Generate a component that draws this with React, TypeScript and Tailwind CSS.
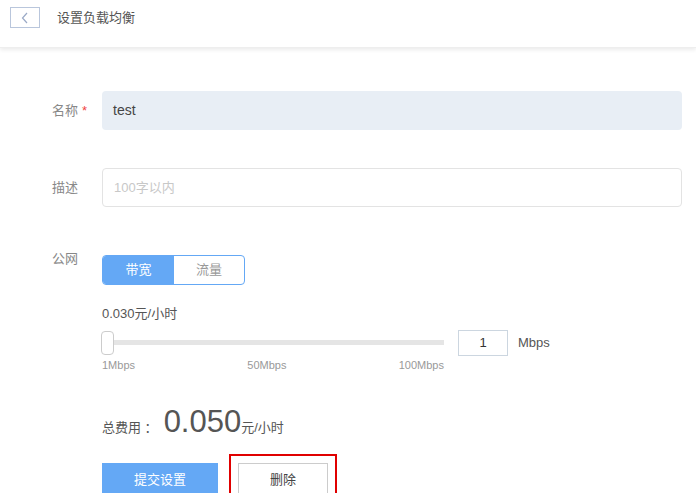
export default function App() {
  return (
    <div className="w-[696px] h-[493px] bg-white text-[13px] text-[#333] overflow-hidden" style={{ fontFamily: '"Liberation Sans","Noto Sans CJK SC",sans-serif' }}>
      <div className="h-[48px] flex items-center shadow-[0_2px_4px_rgba(0,0,0,0.08)] border-b border-[#eee]">
        <div className="ml-[10px] mt-[-12px] w-[30px] h-[21px] border border-[#b9c6dc] flex items-center justify-center">
          <svg width="8" height="12" viewBox="0 0 8 12"><path d="M6 1L1.5 6L6 11" fill="none" stroke="#9aa9c6" strokeWidth="1.2" /></svg>
        </div>
        <span className="ml-[17px] mt-[-12px] text-[#555]">设置负载均衡</span>
      </div>
      <div className="pl-[52px] pt-[43px]">
        <div className="flex items-center">
          <span className="w-[50px] text-[#888]">名称<span className="text-[#f04444] ml-1">*</span></span>
          <div className="w-[580px] h-[39px] bg-[#e8eef5] rounded-sm flex items-center px-[11px] text-[14px] text-[#444]">test</div>
        </div>
        <div className="flex items-center mt-[38px]">
          <span className="w-[50px] text-[#888]">描述</span>
          <div className="w-[580px] h-[39px] border border-[#e3e3e3] rounded-sm flex items-center px-[11px] text-[#c8c8c8]">100字以内</div>
        </div>
        <div className="flex mt-[48px]">
          <span className="w-[50px] text-[#888] mt-[-6px]">公网</span>
          <div>
            <div className="flex w-[143px] h-[30px] border border-[#64a8f5] rounded-sm overflow-hidden">
              <div className="w-[71px] bg-[#64a8f5] text-white flex items-center justify-center">带宽</div>
              <div className="flex-1 text-[#999] flex items-center justify-center">流量</div>
            </div>
            <div className="mt-[19px] text-[#555]">0.030元/小时</div>
            <div className="flex items-center mt-[6px]">
              <div className="relative w-[342px] h-[24px] flex items-center">
                <div className="w-full h-[5px] bg-[#e5e5e5]" />
                <div className="absolute left-[-1px] top-0 w-[13px] h-[24px] bg-white border border-[#ccc] rounded-sm" />
              </div>
              <div className="ml-[14px] w-[50px] h-[26px] border border-[#ccd6e0] flex items-center justify-center text-[#333]">1</div>
              <span className="ml-[10px] text-[#555]">Mbps</span>
            </div>
            <div className="flex justify-between w-[342px] text-[11px] text-[#999] mt-[1px]">
              <span>1Mbps</span><span>50Mbps</span><span>100Mbps</span>
            </div>
          </div>
        </div>
        <div className="ml-[50px] mt-[26px] flex items-baseline text-[#555]">
          <span>总费用 ：</span>
          <span className="text-[31px] text-[#555] ml-[6px]">0.050</span>
          <span>元/小时</span>
        </div>
        <div className="ml-[50px] mt-[8px] flex items-center">
          <div className="w-[116px] h-[35px] bg-[#64a8f5] text-white flex items-center justify-center">提交设置</div>
          <div className="ml-[11px] border-2 border-[#e00000] p-[7px]">
            <div className="w-[90px] h-[35px] border border-[#ccc] flex items-center justify-center text-[#444]">删除</div>
          </div>
        </div>
      </div>
    </div>
  );
}
